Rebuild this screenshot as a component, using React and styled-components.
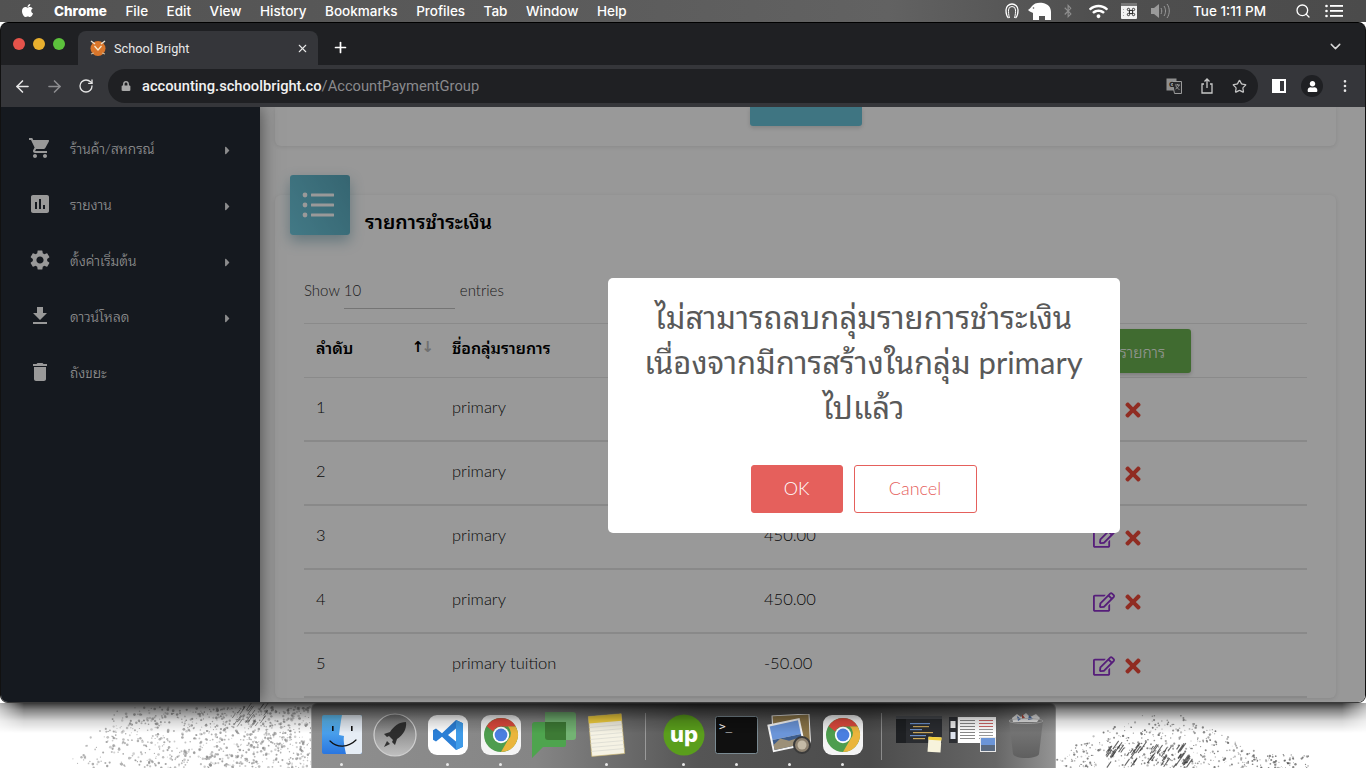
import React from 'react';
import styled, { createGlobalStyle } from 'styled-components';
import { ArrowLeft, ArrowRight, RotateCw, Star, ChevronDown, X, Plus, Search, MoreVertical } from 'lucide-react';
import { FaApple, FaWifi, FaBluetoothB, FaRegEdit, FaTimes, FaLock, FaCaretRight, FaUser } from 'react-icons/fa';
import { MdShoppingCart, MdAssessment, MdSettings, MdFileDownload, MdDelete } from 'react-icons/md';

const THAI = `Lato, "Noto Sans Thai Looped", "Noto Sans Thai", "Noto Sans", "Open Sans", sans-serif`;

const Global = createGlobalStyle`
  html, body { margin: 0; padding: 0; width: 1366px; height: 768px; overflow: hidden; background: #fff; }
  * { box-sizing: border-box; }
`;

const Screen = styled.div`
  width: 1366px; height: 768px; display: flex; flex-direction: column; overflow: hidden;
  font-family: ${THAI};
`;

/* menu bar */
const MenuBar = styled.div`
  height: 22px; flex: none; display: flex; align-items: center; padding: 0 0 0 20px; color: #fff;
  background: linear-gradient(90deg, #525252, #5c5c5c 45%, #626262 65%, #4f4f4f 80%, #4b4b4b);
  font: 500 13.5px Inter, "Liberation Sans", sans-serif;
`;
const AppleMark = styled.span` display: flex; width: 34px; font-size: 15px; margin-top: -2px; `;
const MenuItem = styled.span`
  font-weight: ${p => (p.$bold ? 800 : 500)};
  margin-right: 18.5px; white-space: nowrap;
`;
const Status = styled.div` margin-left: auto; display: flex; align-items: center; height: 22px; `;
const StatusSlot = styled.span`
  width: ${p => p.$w}px; display: flex; align-items: center; justify-content: center;
  opacity: ${p => p.$dim || 1};
`;
const Clock = styled.span` width: 116px; padding-left: 17px; font-size: 13.5px; white-space: nowrap; `;

/* browser window */
const BrowserWindow = styled.div`
  height: 681px; flex: none; display: flex; flex-direction: column; position: relative; z-index: 2;
  border-radius: 8px; overflow: hidden; background: #1f2023;
  border: 1px solid #111; border-top-color: #000; border-bottom: 1px solid #3a3a3a;
`;
const TabStrip = styled.div`
  height: 42px; flex: none; display: flex; align-items: flex-end; background: #1f2023; color: #fff;
`;
const Lights = styled.div` display: flex; gap: 8px; width: 77px; padding: 0 0 15px 12px; `;
const Light = styled.span` width: 12px; height: 12px; border-radius: 50%; background: ${p => p.$c}; `;
const Tab = styled.div`
  width: 240px; height: 34px; border-radius: 8px 8px 0 0; background: #35363a; display: flex; align-items: center;
  padding: 0 9px 0 11px; font: 12.7px Roboto, "Liberation Sans", sans-serif; color: #e8e8e8;
`;
const TabTitle = styled.span` margin-left: 7px; flex: 1; `;
const NewTab = styled.span` display: flex; margin: 0 0 9px 14px; `;
const StripEnd = styled.span` display: flex; margin: 0 21px 10px auto; color: #d8d8d8; `;
const Toolbar = styled.div`
  height: 42px; flex: none; background: #35363a; display: flex; align-items: center; color: #e6e6e6;
  padding: 0 0 0 5px;
`;
const NavBtn = styled.span` width: 32px; display: flex; justify-content: center; color: ${p => p.$c || '#e6e6e6'}; `;
const Omni = styled.div`
  width: 1150px; height: 34px; margin-left: 6px; border-radius: 17px; background: #1f2023; display: flex; align-items: center;
  padding: 0 11px 0 13px; font: 500 14.7px Roboto, "Liberation Sans", sans-serif;
`;
const Host = styled.span` color: #f1f1f1; margin-left: 11px; `;
const PathText = styled.span` color: #8a8a8d; font-weight: 400; `;
const OmniIcons = styled.div` margin-left: auto; display: flex; align-items: center; gap: 18px; color: #c4c4c4; `;
const ToolEnd = styled.div` display: flex; align-items: center; margin-left: 14px; `;
const SidePanelIcon = styled.span`
  width: 14px; height: 14px; background: #fff; display: block; position: relative;
  &::after { content: ''; position: absolute; left: 8px; top: 2px; width: 4px; height: 10px; background: #35363a; }
`;
const Avatar = styled.span`
  width: 22px; height: 22px; border-radius: 50%; background: #1f2023; display: flex; align-items: center; justify-content: center;
  color: #fff; font-size: 11px; margin: 0 14px 0 15px;
`;

/* page */
const Page = styled.div` flex: 1; display: flex; position: relative; overflow: hidden; min-height: 0; background: #fff; `;
const Sidebar = styled.nav`
  width: 259px; flex: none; background: #232a34; padding-top: 13px; box-shadow: 0 0 18px rgba(0,0,0,.55); position: relative; z-index: 1;
`;
const SideRow = styled.div`
  height: 56px; display: flex; align-items: center; color: #fff; font-size: 14px; font-weight: 300;
  padding-left: 27px;
`;
const SideIcon = styled.span` width: 42px; display: flex; font-size: 24px; `;
const SideLabel = styled.span` flex: 1; margin-top: -2px; `;
const SideCaret = styled.span` display: flex; font-size: 13px; margin: 5px 26px 0 0; opacity: .9; `;
const Main = styled.main` flex: 1; padding: 0 29px 0 15px; background: #fdfdfd; `;
const Panel = styled.section`
  background: #fff; border-radius: 6px; box-shadow: 0 1px 4px rgba(0,0,0,.1);
`;
const TopPanel = styled(Panel)`
  height: 39px; border-radius: 0 0 6px 6px; display: flex; justify-content: center; margin-bottom: 49px;
`;
const ClippedButton = styled.div`
  width: 112px; height: 19px; background: #69c3d9; border-radius: 0 0 3px 3px; margin-left: 1px;
  box-shadow: 0 2px 4px rgba(0,0,0,.15);
`;
const ListPanel = styled(Panel)` padding: 0 29px 0 29px; `;
const CardHead = styled.div` display: flex; height: 40px; `;
const Tile = styled.div`
  width: 60px; height: 60px; margin: -20px 0 0 -14px; border-radius: 3px; flex: none;
  background: linear-gradient(60deg, #6fcadf, #5aa9bd); display: flex; align-items: center; justify-content: center;
  padding-right: 5px; box-shadow: 0 6px 14px rgba(60,130,150,.45);
`;
const CardTitle = styled.h2`
  margin: 13px 0 0 15px; font-size: 19.5px; line-height: 28px; font-weight: 600; color: #000; font-family: ${THAI};
`;
const ShowRow = styled.div`
  display: flex; height: 37px; margin-top: 37px; color: #333; font-size: 15px; font-weight: 300; align-items: flex-start; padding-top: 9px;
`;
const ShowInput = styled.span`
  width: 111px; height: 28px; margin: 0 5px 0 4px; border-bottom: 1px solid #c4c4c4;
`;
const TableHead = styled.div`
  display: grid; grid-template-columns: 136px 312px 329px 226px; align-items: center; height: 55px; margin-top: 14px;
  border-top: 1px solid #e6e6e6; border-bottom: 1px solid #e6e6e6; font-weight: 600; color: #000; font-size: 16px;
`;
const HeadText = styled.div`
  padding: 0 0 7px 12px; display: flex; align-items: center; justify-content: space-between; white-space: nowrap;
`;
const SortHead = styled(HeadText)` padding-right: 9px; `;
const Row = styled.div`
  display: grid; grid-template-columns: 136px 312px 329px 226px; align-items: center; height: 64px;
  border-bottom: 2px solid #e4e4e4; color: #111; font-size: 16.5px; font-weight: 300; padding-bottom: 5px;
`;
const Cell = styled.div` padding-left: 12px; display: flex; align-items: center; white-space: nowrap; `;
const SortArrows = styled.span` font: 700 15px "DejaVu Sans", sans-serif; color: #000; letter-spacing: -3px; `;
const Faded = styled.span` color: #bbb; `;
const AddButton = styled.div`
  width: 110px; height: 44px; background: #6cb350; color: #fff; border-radius: 3px; display: flex; align-items: center; justify-content: flex-end;
  font-weight: 300; font-size: 15.5px; box-shadow: 0 2px 4px rgba(0,0,0,.2); padding-right: 26px; white-space: nowrap;
`;
const Actions = styled(Cell)` gap: 7px; padding-top: 6px; `;
const EditIcon = styled.span` display: flex; color: #9033cc; font-size: 22px; `;
const DeleteIcon = styled.span` display: flex; color: #f04a3a; font-size: 22px; `;

/* alert */
const Overlay = styled.div`
  position: absolute; inset: 0; background: rgba(0,0,0,.4); z-index: 5; display: flex; align-items: center; justify-content: center;
  padding: 2px 0 0 361px;
`;
const Modal = styled.div`
  width: 512px; height: 255px; background: #fff; border-radius: 5px; display: flex; flex-direction: column; align-items: center; padding: 17px 30px 0;
`;
const ModalTitle = styled.div`
  font-size: 31px; line-height: 45px; color: #595959; text-align: center; font-weight: 400; white-space: nowrap;
`;
const ModalActions = styled.div` display: flex; gap: 11px; margin-top: 35px; `;
const ModalButton = styled.div`
  height: 48px; width: ${p => p.$w}px; border-radius: 3px; border: 1px solid #e5605c; display: flex; align-items: center; justify-content: center;
  font-size: 18px; font-weight: 300; padding-bottom: 2px;
  background: ${p => (p.$solid ? '#e5605c' : '#fff')}; color: ${p => (p.$solid ? '#fff' : '#e5605c')};
`;

/* desktop + dock */
const Desk = styled.div`
  flex: 1; position: relative; display: flex; justify-content: center; background: #fff;
  &::after {
    content: ''; position: absolute; left: 0; right: 0; top: 0; height: 30px; z-index: 1; pointer-events: none;
    background: linear-gradient(180deg, rgba(0,0,0,.78), rgba(0,0,0,.5) 22%, rgba(0,0,0,.16) 60%, transparent);
    -webkit-mask-image: linear-gradient(90deg, rgba(0,0,0,.4), #000 24px, #000 calc(100% - 24px), rgba(0,0,0,.4));
  }
`;
const Wallpaper = styled.svg` position: absolute; left: 0; top: 0; filter: blur(.5px); `;
const Dock = styled.div`
  width: 745px; height: 65px; position: relative; display: flex; padding: 6px 5px 0 3px; border-radius: 6px 6px 0 0;
  border: 1px solid rgba(255,255,255,.3); border-bottom: 0; margin-left: 1px;
  background: linear-gradient(90deg, #8f8f8f, #858585 30%, #555 52%, #4c4c4c 75%, #666 92%, #949494);
`;
const DockSlot = styled.div` width: 53px; height: 50px; display: flex; align-items: center; justify-content: center; position: relative; flex: none; `;
const DockDot = styled.span`
  position: absolute; bottom: -6px; left: 50%; margin-left: -1.5px; width: 3px; height: 3px; border-radius: 50%; background: #e8e8e8;
`;
const DockSep = styled.div`
  width: 24px; flex: none; display: flex; justify-content: center; padding-top: 3px;
  &::after { content: ''; width: 1px; height: 47px; background: rgba(255,255,255,.35); }
`;

/* wallpaper speckle, seeded so that each run draws the same */
function makeSpeckle() {
  let s = 12345;
  const r = () => { s = (s * 16807) % 2147483647; return s / 2147483647; };
  const dots = [];
  const dot = (x, y, rad, c, o) => dots.push(<circle key={dots.length} cx={x} cy={y} r={rad} fill={c} opacity={o} />);
  for (let i = 0; i < 900; i++) {
    const y = 4 + r() * 61;
    const x0 = 125 - y;
    const x = x0 + Math.pow(r(), .7) * (312 - x0);
    dot(x, y, .5 + r() * .9, '#8a8a8a', .35 + r() * .45);
  }
  for (let i = 0; i < 420; i++) {
    const y = 12 + Math.pow(r(), .6) * 53;
    const x = 1160 + (r() - .5) * 2 * y * 2;
    if (x > 1056) dot(x, y, .4 + r() * .8, '#666', .4 + r() * .5);
  }
  for (let i = 0; i < 70; i++) dot(1240 + r() * 70, 50 + r() * 15, .4 + r() * .8, '#555', .7);
  const hatch = [];
  const line = (n, x0, x1, y0, y1, c, w) => {
    for (let i = 0; i < n; i++) {
      const x = x0 + r() * (x1 - x0), y = y0 + r() * (y1 - y0), l = 3 + r() * 6;
      hatch.push(<line key={hatch.length} x1={x} y1={y} x2={x + l * .7} y2={y - l} stroke={c} strokeWidth={w} opacity=".75" />);
    }
  };
  line(24, 232, 264, 4, 24, '#555', .8);
  line(60, 1105, 1190, 44, 65, '#333', 1.1);
  return <>{dots}{hatch}</>;
}
const speckle = makeSpeckle();

/* drawn icons */
const ChromeTile = () => (
  <svg width="40" height="40" viewBox="0 0 40 40">
    <rect width="40" height="40" rx="9" fill="#f4f4f4" />
    <g transform="translate(3 3) scale(.708)">
      <circle cx="24" cy="24" r="24" fill="#4e9d4e" />
      <path d="M24 0a24 24 0 0 1 20.8 12H24a12 12 0 0 0-11 7.2L3.8 11.7A24 24 0 0 1 24 0z" fill="#dc4a3d" />
      <path d="M44.8 12A24 24 0 0 1 24 48l10.4-18a12 12 0 0 0-.8-18z" fill="#eab53c" />
      <circle cx="24" cy="24" r="11.5" fill="#fff" />
      <circle cx="24" cy="24" r="9" fill="#4a7fe0" />
    </g>
  </svg>
);
const Finder = () => (
  <svg width="40" height="40" viewBox="0 0 40 40">
    <defs><linearGradient id="fb" x1="0" y1="0" x2="0" y2="1"><stop offset="0" stopColor="#63c2f5" /><stop offset="1" stopColor="#2a76e0" /></linearGradient></defs>
    <rect width="40" height="39" rx="2" fill="url(#fb)" />
    <path d="M20 0h18a2 2 0 0 1 2 2v35a2 2 0 0 1-2 2H24c-1-5-3-13-2-18l-5-1C18 12 19 5 20 0z" fill="#e6edf5" />
    <path d="M8 26c7 7 18 7 26-1" fill="none" stroke="#111" strokeWidth="1.2" strokeLinecap="round" />
    <rect x="10" y="11" width="1.6" height="5" fill="#111" /><rect x="29" y="11" width="1.6" height="5" fill="#111" />
  </svg>
);
const Launchpad = () => (
  <svg width="44" height="44" viewBox="0 0 44 44">
    <defs><linearGradient id="lp" x1="0" y1="0" x2="0" y2="1"><stop offset="0" stopColor="#6e6e6e" /><stop offset="1" stopColor="#c0c0c0" /></linearGradient></defs>
    <circle cx="22" cy="22" r="21" fill="url(#lp)" stroke="#d0d0d0" strokeWidth="1.2" />
    <path d="M33 9c-7 0-12 4-16 10l-6 2 3 3 2-1 4 4-1 2 3 3 2-6c6-4 10-10 9-17z" fill="#2e2e2e" />
    <path d="M14 28l-3 6 6-3z" fill="#333" />
  </svg>
);
const VSCode = () => (
  <svg width="40" height="40" viewBox="0 0 40 40">
    <rect width="40" height="40" rx="9" fill="#fff" />
    <path d="M28 5l7 3.3v23.4L28 35 14 21.8 8 26.5l-3-1.7v-9.6l3-1.7 6 4.7zM28 13.5l-8 6.5 8 6.5z" fill="#2b7fd6" />
    <path d="M28 5l7 3.3v23.4L28 35z" fill="#3f9be8" />
  </svg>
);
const Chat = () => (
  <svg width="44" height="46" viewBox="0 0 44 46">
    <path d="M13 0h28a3 3 0 0 1 3 3v22a3 3 0 0 1-3 3h-7v-8H13z" fill="#73b373" />
    <path d="M3 10h31v23a2 2 0 0 1-2 2H11l-11 11V13a3 3 0 0 1 3-3z" fill="#4ea44e" />
    <path d="M13 10h21v18H16a3 3 0 0 1-3-3z" fill="#3d7a35" />
  </svg>
);
const Notes = () => (
  <svg width="40" height="46" viewBox="0 0 40 46">
    <g transform="rotate(-5 20 23)">
      <rect x="3" y="3" width="33" height="40" fill="#f5f2e4" stroke="#c9b36a" strokeWidth=".6" />
      <rect x="3" y="3" width="33" height="7" fill="#f6d23f" />
      {[14, 18, 22, 26, 30, 34, 38].map(y => <line key={y} x1="3" x2="36" y1={y} y2={y} stroke="#d8d8d0" strokeWidth=".7" />)}
    </g>
  </svg>
);
const Upwork = () => (
  <svg width="42" height="42" viewBox="0 0 42 42">
    <circle cx="21" cy="21" r="20.5" fill="#5a9e1c" />
    <text x="21" y="28" textAnchor="middle" fontFamily="Inter, sans-serif" fontWeight="800" fontSize="22" fill="#fff">up</text>
  </svg>
);
const Terminal = () => (
  <svg width="43" height="38" viewBox="0 0 43 38">
    <rect x=".5" y=".5" width="42" height="37" rx="2" fill="#101010" stroke="#7a8a92" />
    <text x="4" y="14" fontFamily="'DejaVu Sans Mono', monospace" fontSize="11" fill="#fff">&gt;_</text>
  </svg>
);
const Preview = () => (
  <svg width="46" height="42" viewBox="0 0 46 42">
    <g transform="rotate(-3 22 20)">
      <rect x="6" y="1" width="37" height="29" fill="#8a7448" stroke="#eee" />
    </g>
    <g transform="rotate(-12 20 22)">
      <rect x="3" y="7" width="33" height="28" fill="#f4f4f4" />
      <rect x="5" y="9" width="29" height="14" fill="#6b95d8" />
      <rect x="5" y="23" width="29" height="10" fill="#3d5c8a" />
      <path d="M5 28l8-5 8 4 13-1v7H5z" fill="#9c9078" />
    </g>
    <circle cx="35" cy="31" r="8" fill="#8e8270" stroke="#3a3a3a" strokeWidth="2" />
    <circle cx="35" cy="31" r="4.5" fill="#c4baa6" />
  </svg>
);
const ThumbCode = () => (
  <svg width="48" height="40" viewBox="0 0 48 40">
    <rect x="0" y="1" width="46" height="27" fill="#2a2c30" />
    <rect x="0" y="1" width="46" height="3" fill="#45474c" />
    <rect x="0" y="4" width="10" height="24" fill="#1e2023" />
    {[8, 11, 14, 17, 20, 23].map((y, i) => <rect key={y} x={14 + (i % 2) * 3} y={y} width={20 - (i % 3) * 4} height="1.2" fill={i % 2 ? '#c9a65a' : '#6a8ec9'} />)}
    <g transform="rotate(4 37 30)"><rect x="32" y="22" width="13" height="15" fill="#f7f3dc" /><rect x="32" y="22" width="13" height="3" fill="#f2cf3d" /></g>
  </svg>
);
const ThumbDoc = () => (
  <svg width="48" height="38" viewBox="0 0 48 38">
    <rect x="0" y="1" width="8" height="26" fill="#2d2f33" />
    <rect x="1.5" y="5" width="5" height="7" fill="#eee" /><rect x="1.5" y="16" width="5" height="7" fill="#dfe4ee" />
    <rect x="9" y="1" width="38" height="26" fill="#fff" />
    {[4, 7, 10, 13, 16, 19, 22].map(y => <g key={y}><rect x="11" y={y} width="15" height="1" fill="#888" /><rect x="30" y={y} width="14" height="1" fill={y < 12 ? '#c66' : '#999'} /></g>)}
    <rect x="31" y="21" width="16" height="15" fill="#e8e8e8" /><rect x="32" y="22" width="14" height="7" fill="#6b95d8" /><rect x="32" y="29" width="14" height="6" fill="#5a6a80" />
  </svg>
);
const Trash = () => (
  <svg width="36" height="46" viewBox="0 0 36 46">
    <defs><linearGradient id="tr" x1="0" y1="0" x2="0" y2="1"><stop offset="0" stopColor="#7d7d7d" /><stop offset="1" stopColor="#5f5f5f" /></linearGradient></defs>
    <path d="M1 8h34l-4 34c-.3 2-6 4-13 4s-12.700-2-13-4z" fill="url(#tr)" />
    <path d="M4 6l5-4 4 3 5-4 4 4 6-3 4 4-3 4H5z" fill="#e4e4e4" />
    <path d="M9 4l4 3-3 2zM21 3l4 4-5 1z" fill="#4a6ea8" /><path d="M14 2l3 4-3 1z" fill="#b34a3c" />
    <ellipse cx="18" cy="9" rx="17" ry="2.500" fill="none" stroke="#b5b5b5" strokeWidth=".8" />
  </svg>
);
const Elephant = () => (
  <svg width="23" height="18" viewBox="0 0 23 18">
    <path d="M0 8c2-1 3-3 4-4 2-3 7-4 11-3 5 1 8 4 8 9v8h-6v-4h-6v4H5v-7C4 10 2 10 0 8z" fill="#fff" />
    <circle cx="5.500" cy="6" r=".8" fill="#555" />
  </svg>
);
const Headset = () => (
  <svg width="14" height="18" viewBox="0 0 14 18">
    <path d="M3.500 16C1.500 14 1 11 1 8a6 6 0 0 1 12 0c0 3-.5 6-2.500 8" fill="none" stroke="#fff" strokeWidth="1.300" />
    <path d="M4.500 16C3.500 13 3.500 10 3.500 8a3.500 3.500 0 0 1 7 0c0 2 0 5-1 8" fill="none" stroke="#fff" strokeWidth="1" />
  </svg>
);
const CmdWindow = () => (
  <svg width="16" height="16" viewBox="0 0 16 16">
    <rect width="16" height="16" rx="1" fill="#f2f2f2" />
    <rect width="16" height="3" fill="#777" />
    <g fill="none" stroke="#333" strokeWidth="1">
      <rect x="8.500" y="7.500" width="3" height="3" /><circle cx="7.500" cy="6.500" r="1.200" /><circle cx="12.500" cy="6.500" r="1.200" />
      <circle cx="7.500" cy="11.500" r="1.200" /><circle cx="12.500" cy="11.500" r="1.200" />
    </g>
    <g fill="#aaa"><rect x="2" y="6" width="1" height="1" /><rect x="2" y="9" width="1" height="1" /><rect x="2" y="12" width="1" height="1" /></g>
  </svg>
);
const Speaker = () => (
  <svg width="21" height="16" viewBox="0 0 21 16">
    <path d="M1 5h3l5-4v14l-5-4H1z" fill="#9a9a9a" />
    <path d="M11 5c1 2 1 4 0 6M14 3c2 3 2 7 0 10M17 1c3 4 3 10 0 14" fill="none" stroke="#9a9a9a" strokeWidth="1" />
  </svg>
);
const MenuLines = () => (
  <svg width="18" height="14" viewBox="0 0 18 14">
    <g fill="#fff"><circle cx="1.500" cy="2" r="1.300" /><circle cx="1.500" cy="7" r="1.300" /><circle cx="1.500" cy="12" r="1.300" />
      <rect x="5" y="1" width="13" height="1.800" /><rect x="5" y="6" width="13" height="1.800" /><rect x="5" y="11" width="13" height="1.800" /></g>
  </svg>
);
const Translate = () => (
  <svg width="16" height="16" viewBox="0 0 16 16">
    <rect x=".5" y=".5" width="10" height="12" fill="#8f8f8f" />
    <path d="M6 3.500h9.500v12H8.500z" fill="#2a2b2e" stroke="#9a9a9a" />
    <text x="3" y="9" fontFamily="'DejaVu Sans', sans-serif" fontSize="7" fontWeight="700" fill="#222">G</text>
    <path d="M9 7h5M11.500 6v1M13 7c-.5 2-2 3.500-3.500 4M10 8c.5 1.500 2 3 3.500 3.500" fill="none" stroke="#a8a8a8" strokeWidth=".8" />
  </svg>
);
const ShareIcon = () => (
  <svg width="14" height="16" viewBox="0 0 14 16" fill="none" stroke="#c8c8c8" strokeWidth="1.300">
    <path d="M4 6H2v9h10V6h-2" /><path d="M7 10V1M4.500 3.500L7 1l2.500 2.500" />
  </svg>
);
const Favicon = () => (
  <svg width="18" height="18" viewBox="0 0 18 18">
    <circle cx="9" cy="9.500" r="7.500" fill="#d9762b" />
    <path d="M2 2l4 3M16 2l-4 3" stroke="#e8e0d0" strokeWidth="1.400" />
    <path d="M5.500 7L9 11l3.500-4" fill="none" stroke="#f7e7c8" strokeWidth="1.300" />
    <path d="M2 15l3-1M16 15l-3-1" stroke="#cbb89a" strokeWidth="1.200" />
  </svg>
);
const ListGlyph = () => (
  <svg width="32" height="26" viewBox="0 0 32 26">
    <g fill="#fff"><circle cx="3" cy="3" r="2.400" /><circle cx="3" cy="13" r="2.400" /><circle cx="3" cy="23" r="2.400" />
      <rect x="9" y="1.500" width="23" height="3" rx=".5" /><rect x="9" y="11.500" width="23" height="3" rx=".5" /><rect x="9" y="21.500" width="23" height="3" rx=".5" /></g>
  </svg>
);

const MENU = ['File', 'Edit', 'View', 'History', 'Bookmarks', 'Profiles', 'Tab', 'Window', 'Help'];
const SIDE = [
  [MdShoppingCart, 'ร้านค้า/สหกรณ์', true],
  [MdAssessment, 'รายงาน', true],
  [MdSettings, 'ตั้งค่าเริ่มต้น', true],
  [MdFileDownload, 'ดาวน์โหลด', true],
  [MdDelete, 'ถังขยะ', false],
];
const ROWS = [
  [1, 'primary', ''],
  [2, 'primary', ''],
  [3, 'primary', '450.00'],
  [4, 'primary', '450.00'],
  [5, 'primary tuition', '-50.00'],
];
const DOCK_A = [
  [Finder, true], [Launchpad, false], [VSCode, true], [ChromeTile, true], [Chat, false], [Notes, true],
];
const DOCK_B = [[Upwork, true], [Terminal, true], [Preview, true], [ChromeTile, true]];
const DOCK_C = [[ThumbCode, false], [ThumbDoc, false], [Trash, false]];

const DockGroup = ({ items }) => items.map(([Icon, on], i) => (
  <DockSlot key={i}><Icon />{on && <DockDot />}</DockSlot>
));

export default function App() {
  return (
    <Screen>
      <Global />
      <MenuBar>
        <AppleMark><FaApple /></AppleMark>
        <MenuItem $bold>Chrome</MenuItem>
        {MENU.map(m => <MenuItem key={m}>{m}</MenuItem>)}
        <Status>
          <StatusSlot $w={26}><Headset /></StatusSlot>
          <StatusSlot $w={28}><Elephant /></StatusSlot>
          <StatusSlot $w={30} $dim=".35"><FaBluetoothB size={14} /></StatusSlot>
          <StatusSlot $w={30}><FaWifi size={19} /></StatusSlot>
          <StatusSlot $w={31}><CmdWindow /></StatusSlot>
          <StatusSlot $w={32}><Speaker /></StatusSlot>
          <Clock>Tue 1:11 PM</Clock>
          <StatusSlot $w={21}><Search size={16} /></StatusSlot>
          <StatusSlot $w={41}><MenuLines /></StatusSlot>
          <StatusSlot $w={12} />
        </Status>
      </MenuBar>
      <BrowserWindow>
        <TabStrip>
          <Lights><Light $c="#e5534b" /><Light $c="#e9b02e" /><Light $c="#5cc23c" /></Lights>
          <Tab>
            <Favicon />
            <TabTitle>School Bright</TabTitle>
            <X size={13} />
          </Tab>
          <NewTab><Plus size={17} strokeWidth={2.4} /></NewTab>
          <StripEnd><ChevronDown size={17} /></StripEnd>
        </TabStrip>
        <Toolbar>
          <NavBtn><ArrowLeft size={19} /></NavBtn>
          <NavBtn $c="#8d8d90"><ArrowRight size={19} /></NavBtn>
          <NavBtn><RotateCw size={16} /></NavBtn>
          <Omni>
            <FaLock size={10} color="#a8a8a8" />
            <Host>accounting.schoolbright.co<PathText>/AccountPaymentGroup</PathText></Host>
            <OmniIcons>
              <Translate />
              <ShareIcon />
              <Star size={15} />
            </OmniIcons>
          </Omni>
          <ToolEnd>
            <SidePanelIcon />
            <Avatar><FaUser /></Avatar>
            <MoreVertical size={16} />
          </ToolEnd>
        </Toolbar>
        <Page>
          <Sidebar>
            {SIDE.map(([Icon, label, caret]) => (
              <SideRow key={label}>
                <SideIcon><Icon /></SideIcon>
                <SideLabel>{label}</SideLabel>
                {caret && <SideCaret><FaCaretRight /></SideCaret>}
              </SideRow>
            ))}
          </Sidebar>
          <Main>
            <TopPanel><ClippedButton /></TopPanel>
            <ListPanel>
              <CardHead>
                <Tile><ListGlyph /></Tile>
                <CardTitle>รายการชำระเงิน</CardTitle>
              </CardHead>
              <ShowRow>Show<ShowInput>10</ShowInput>entries</ShowRow>
              <TableHead>
                <SortHead>ลำดับ<SortArrows>↑<Faded>↓</Faded></SortArrows></SortHead>
                <HeadText>ชื่อกลุ่มรายการ</HeadText>
                <HeadText />
                <div><AddButton>รายการ</AddButton></div>
              </TableHead>
              {ROWS.map(([n, name, amt]) => (
                <Row key={n}>
                  <Cell>{n}</Cell>
                  <Cell>{name}</Cell>
                  <Cell>{amt}</Cell>
                  <Actions>
                    <EditIcon><FaRegEdit /></EditIcon>
                    <DeleteIcon><FaTimes /></DeleteIcon>
                  </Actions>
                </Row>
              ))}
            </ListPanel>
          </Main>
          <Overlay>
            <Modal>
              <ModalTitle>ไม่สามารถลบกลุ่มรายการชำระเงิน<br />เนื่องจากมีการสร้างในกลุ่ม primary<br />ไปแล้ว</ModalTitle>
              <ModalActions>
                <ModalButton $solid $w={92}>OK</ModalButton>
                <ModalButton $w={123}>Cancel</ModalButton>
              </ModalActions>
            </Modal>
          </Overlay>
        </Page>
      </BrowserWindow>
      <Desk>
        <Wallpaper width="1366" height="65" viewBox="0 0 1366 65">{speckle}</Wallpaper>
        <Dock>
          <DockGroup items={DOCK_A} />
          <DockSep />
          <DockGroup items={DOCK_B} />
          <DockSep />
          <DockGroup items={DOCK_C} />
        </Dock>
      </Desk>
    </Screen>
  );
}
